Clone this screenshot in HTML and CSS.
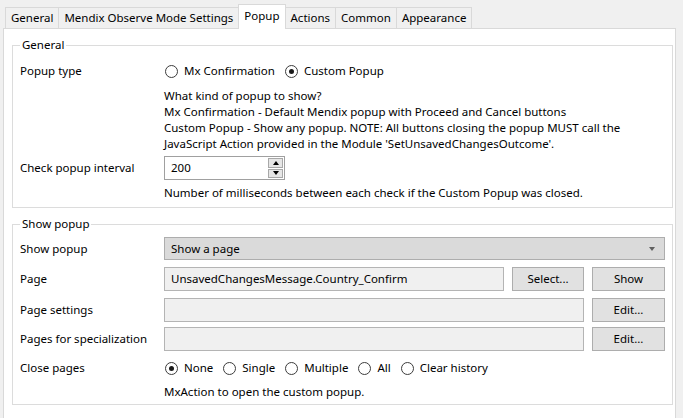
FILE: index.html
```html
<!DOCTYPE html>
<html>
<head>
<meta charset="utf-8">
<link rel="stylesheet" href="styles.css">
</head>
<body>
<div class="window">
  <div class="tabs">
    <div class="tab">General</div>
    <div class="tab">Mendix Observe Mode Settings</div>
    <div class="tab active">Popup</div>
    <div class="tab">Actions</div>
    <div class="tab">Common</div>
    <div class="tab">Appearance</div>
  </div>
  <div class="panel">
    <fieldset class="group group-general">
      <legend>General</legend>
      <div class="row row-radio first">
        <div class="label">Popup type</div>
        <div class="radios">
          <span class="radio"><span class="dot"></span>Mx Confirmation</span>
          <span class="radio checked"><span class="dot"></span>Custom Popup</span>
        </div>
      </div>
      <div class="help desc">What kind of popup to show?<br>Mx Confirmation - Default Mendix popup with Proceed and Cancel buttons<br>Custom Popup - Show any popup. NOTE: All buttons closing the popup MUST call the<br>JavaScript Action provided in the Module 'SetUnsavedChangesOutcome'.</div>
      <div class="row row-field interval">
        <div class="label">Check popup interval</div>
        <div class="spin">
          <span class="spin-value">200</span>
          <span class="spin-buttons">
            <span class="spin-btn"><span class="tri-up"></span></span>
            <span class="spin-btn"><span class="tri-down"></span></span>
          </span>
        </div>
      </div>
      <div class="help after-interval">Number of milliseconds between each check if the Custom Popup was closed.</div>
    </fieldset>

    <fieldset class="group group-show">
      <legend>Show popup</legend>
      <div class="row row-select first">
        <div class="label">Show popup</div>
        <div class="select"><span>Show a page</span><span class="tri-down dark"></span></div>
      </div>
      <div class="row row-field r-page">
        <div class="label">Page</div>
        <div class="controls">
          <div class="field">UnsavedChangesMessage.Country_Confirm</div>
          <div class="btn btn-select">Select...</div>
          <div class="btn">Show</div>
        </div>
      </div>
      <div class="row row-field r-settings">
        <div class="label">Page settings</div>
        <div class="controls">
          <div class="field"></div>
          <div class="btn">Edit...</div>
        </div>
      </div>
      <div class="row row-field r-spec">
        <div class="label">Pages for specialization</div>
        <div class="controls">
          <div class="field"></div>
          <div class="btn">Edit...</div>
        </div>
      </div>
      <div class="row row-radio r-close">
        <div class="label">Close pages</div>
        <div class="radios">
          <span class="radio checked"><span class="dot"></span>None</span>
          <span class="radio"><span class="dot"></span>Single</span>
          <span class="radio"><span class="dot"></span>Multiple</span>
          <span class="radio"><span class="dot"></span>All</span>
          <span class="radio"><span class="dot"></span>Clear history</span>
        </div>
      </div>
      <div class="help after-close">MxAction to open the custom popup.</div>
    </fieldset>
  </div>
</div>
</body>
</html>
```

FILE: styles.css
```css
* { box-sizing: border-box; }
html, body { margin: 0; padding: 0; }
body {
  background: #f0f0f0;
  font-family: "Noto Sans", "Open Sans", sans-serif;
  font-size: 11.5px;
  line-height: 16px;
  color: #000;
  width: 683px;
  height: 418px;
  overflow: hidden;
}
.window { padding: 0 7px 0 3px; }

.tabs {
  display: flex;
  align-items: flex-end;
  height: 28px;
  padding-left: 2px;
  position: relative;
  z-index: 1;
}
.tab {
  height: 21px;
  padding: 0 5px;
  line-height: 20px;
  border: 1px solid #d9d9d9;
  border-bottom: none;
  margin-right: -1px;
  background: #f0f0f0;
  white-space: nowrap;
}
.tab.active {
  height: 25px;
  margin-bottom: -1px;
  background: #fff;
  line-height: 22px;
  position: relative;
  z-index: 2;
}

.panel {
  background: #fff;
  border: 1px solid #d9d9d9;
  height: 400px;
  padding: 8px 2px 0 8px;
}

.group {
  margin: 0;
  border: 1px solid #dcdcdc;
  padding: 0 7px 6px 7px;
  min-width: 0;
}
.group legend {
  padding: 0 2px;
  line-height: 16px;
}
.group-show { margin-top: 8px; padding-bottom: 4px; }

.row {
  display: grid;
  grid-template-columns: 144px 1fr;
  align-items: center;
}
.row-radio { height: 20px; }
.row-field { height: 24px; }
.row-select { height: 23px; }

.group-general .first { margin-top: 8px; }
.desc { margin-top: 7px; }
.interval { margin-top: 4px; }
.after-interval { margin-top: 5px; }

.group-show .first { margin-top: 5px; }
.r-page { margin-top: 7px; }
.r-settings { margin-top: 7px; }
.r-spec { margin-top: 5px; }
.r-close { margin-top: 7px; }
.after-close { margin-top: 6px; }

.help { padding-left: 144px; }

.radios { display: flex; align-items: center; padding-left: 1px; }
.radio { display: inline-flex; align-items: center; margin-right: 10px; white-space: nowrap; }
.dot {
  width: 13px; height: 13px;
  border: 1px solid #3c3c3c;
  border-radius: 50%;
  background: #fff;
  margin-right: 6px;
  position: relative;
  flex: none;
}
.radio.checked .dot::after {
  content: "";
  position: absolute;
  left: 3px; top: 3px;
  width: 5px; height: 5px;
  border-radius: 50%;
  background: #1a1a1a;
}

.spin {
  width: 121px;
  height: 24px;
  border: 1px solid #a0a0a0;
  background: #fff;
  display: flex;
  align-items: center;
  justify-content: space-between;
  padding: 1px 1px 1px 6px;
}
.spin-buttons { display: flex; flex-direction: column; gap: 1px; height: 100%; }
.spin-btn {
  width: 15px;
  flex: 1;
  background: #e6e6e6;
  border: 1px solid #a8a8a8;
  display: flex; align-items: center; justify-content: center;
}
.tri-up, .tri-down { width: 0; height: 0; border-left: 3.5px solid transparent; border-right: 3.5px solid transparent; }
.tri-up { border-bottom: 4px solid #000; }
.tri-down { border-top: 4px solid #000; }
.tri-down.dark { border-top-color: #606060; }

.select {
  height: 23px;
  background: #dadada;
  border: 1px solid #adadad;
  display: flex;
  align-items: center;
  justify-content: space-between;
  padding: 0 9px 0 6px;
}

.controls { display: flex; gap: 8px; height: 24px; }
.field {
  flex: 1;
  background: #f0f0f0;
  border: 1px solid #b4b4b4;
  padding: 0 6px;
  line-height: 22px;
  white-space: nowrap;
}
.btn {
  width: 73px;
  flex: none;
  background: #e1e1e1;
  border: 1px solid #adadad;
  text-align: center;
  line-height: 22px;
}
.btn-select { width: 72px; }
```
